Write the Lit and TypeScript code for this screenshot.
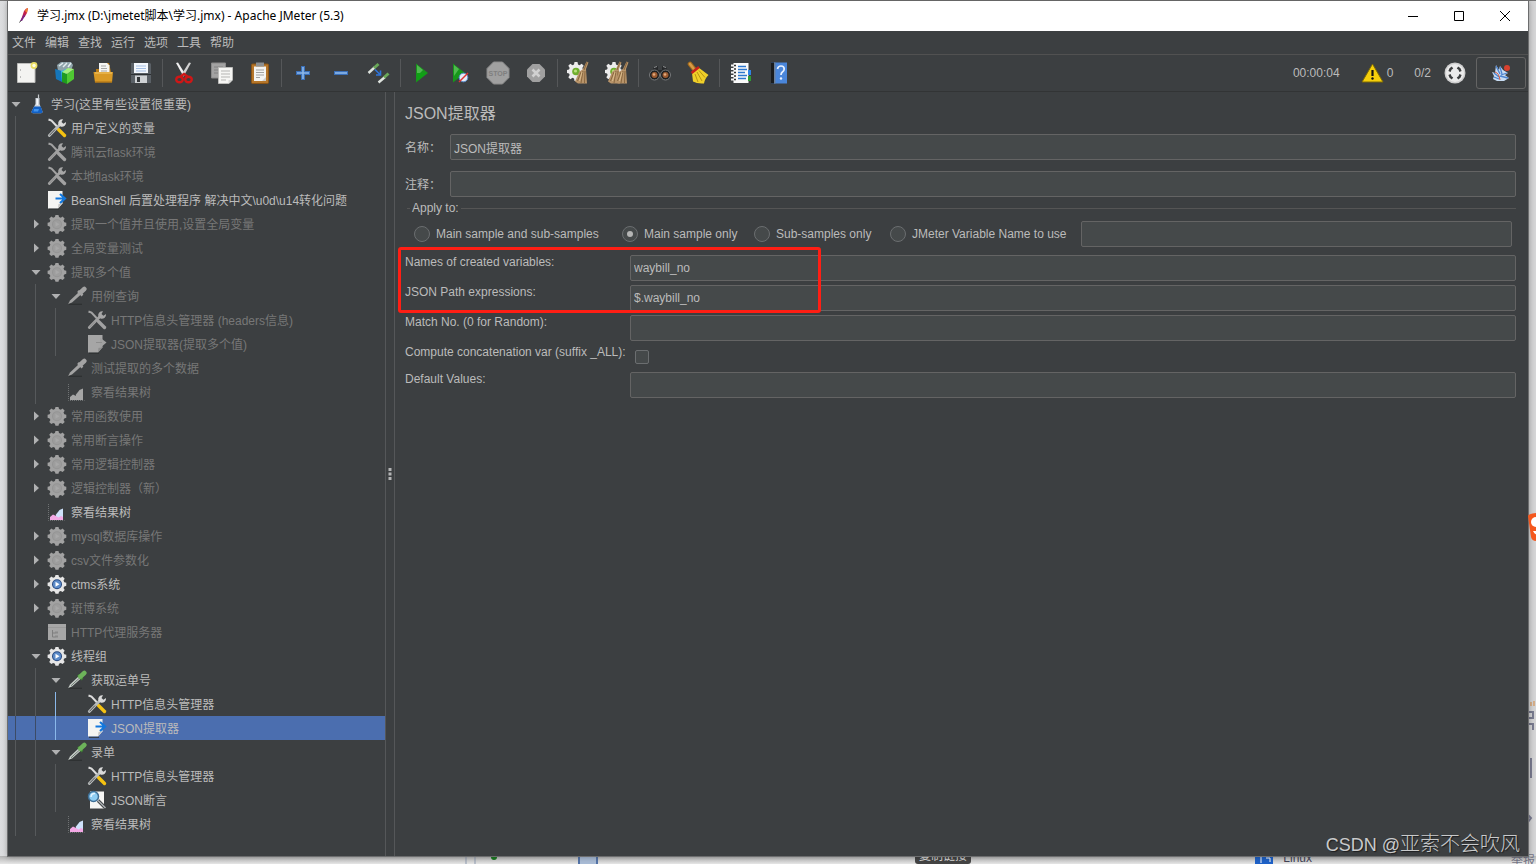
import { LitElement, html, svg, css, nothing } from "lit";
import { customElement, state } from "lit/decorators.js";
import { classMap } from "lit/directives/class-map.js";

type Row = { level: number; icon: string; text: string; off?: boolean; open?: boolean; closed?: boolean };

const rows: Row[] = [
  { level: 0, icon: "flask", text: "学习(这里有些设置很重要)", open: true },
  { level: 1, icon: "tools", text: "用户定义的变量" },
  { level: 1, icon: "tools", text: "腾讯云flask环境", off: true },
  { level: 1, icon: "tools", text: "本地flask环境", off: true },
  { level: 1, icon: "export", text: "BeanShell 后置处理程序 解决中文\\u0d\\u14转化问题" },
  { level: 1, icon: "gear", text: "提取一个值并且使用,设置全局变量", off: true, closed: true },
  { level: 1, icon: "gear", text: "全局变量测试", off: true, closed: true },
  { level: 1, icon: "gear", text: "提取多个值", off: true, open: true },
  { level: 2, icon: "dropper", text: "用例查询", off: true, open: true },
  { level: 3, icon: "tools", text: "HTTP信息头管理器 (headers信息)", off: true },
  { level: 3, icon: "export", text: "JSON提取器(提取多个值)", off: true },
  { level: 2, icon: "dropper", text: "测试提取的多个数据", off: true },
  { level: 2, icon: "chart", text: "察看结果树", off: true },
  { level: 1, icon: "gear", text: "常用函数使用", off: true, closed: true },
  { level: 1, icon: "gear", text: "常用断言操作", off: true, closed: true },
  { level: 1, icon: "gear", text: "常用逻辑控制器", off: true, closed: true },
  { level: 1, icon: "gear", text: "逻辑控制器（新）", off: true, closed: true },
  { level: 1, icon: "chart", text: "察看结果树" },
  { level: 1, icon: "gear", text: "mysql数据库操作", off: true, closed: true },
  { level: 1, icon: "gear", text: "csv文件参数化", off: true, closed: true },
  { level: 1, icon: "gear", text: "ctms系统", closed: true },
  { level: 1, icon: "gear", text: "斑博系统", off: true, closed: true },
  { level: 1, icon: "server", text: "HTTP代理服务器", off: true },
  { level: 1, icon: "gear", text: "线程组", open: true },
  { level: 2, icon: "dropper", text: "获取运单号", open: true },
  { level: 3, icon: "tools", text: "HTTP信息头管理器" },
  { level: 3, icon: "export", text: "JSON提取器" },
  { level: 2, icon: "dropper", text: "录单", open: true },
  { level: 3, icon: "tools", text: "HTTP信息头管理器" },
  { level: 3, icon: "assert", text: "JSON断言" },
  { level: 2, icon: "chart", text: "察看结果树" },
];

/* Icons of the tree, on a 20 x 20 grid. */
const gearPath =
  "M8.500 1h3l.5 2 1.800.8 1.800-1.200 2.100 2.100-1.200 1.900.8 1.700 2 .5v3l-2 .6-.8 1.700 1.200 1.900-2.100 2.100-1.900-1.200-1.700.8-.5 2h-3l-.6-2-1.700-.8-1.900 1.200-2.100-2.100 1.200-1.900L2.600 12.400l-2-.6v-3l2-.5.8-1.700-1.200-1.900 2.100-2.100 1.900 1.200L7.900 3z";

const treeIcon = (name: string, off = false) => {
  const c = (on: string, grey: string) => (off ? grey : on);
  switch (name) {
    case "flask":
      return svg`<path d="M8.500 4h4v6l3 7.500q.3 1.700-1.500 1.700H6q-1.800 0-1.500-1.700l4-7.500z" fill="#cfd5dc"/><path d="M9.500 5h1.500v6H9.500z" fill="#f6f8fa"/><path d="M7 12.500h6.800l1.700 5q.2 1.700-1.500 1.700H6q-1.700 0-1.500-1.700z" fill="#1260c4"/><path d="M7 15h5l-1 2.500H6.500z" fill="#3f93f0"/><path d="M11.500.5V5" stroke="#c3c7cb" stroke-width="1.200"/>`;
    case "tools":
      return svg`<path d="M1.500 1.500l3 1 5.500 6" stroke="${c("#dcdcdc", "#a2a2a2")}" stroke-width="2" fill="none"/><path d="M11.500 11.500l6 6" stroke="${c("#f5c211", "#a2a2a2")}" stroke-width="3.400" stroke-linecap="round"/><path d="M2.300 17.500L13 6.500" stroke="${c("#b9bcbc", "#a2a2a2")}" stroke-width="2.800" stroke-linecap="round"/><path d="M2.500 17.300L8 11.500" stroke="${c("#4b4e50", "#8b8b8b")}"/><path d="M16 1.200a4.200 4.200 0 0 0-4.700 5.200l2.600 2.300a4.200 4.200 0 0 0 5.100-4.700l-2.600 1.700-1.900-1.700z" fill="${c("#dadada", "#a6a6a6")}"/>`;
    case "export":
      return svg`<path d="M1 1h14.500v12.500L11 18.500H1z" fill="${c("#f4f4f2", "#a6a6a6")}"/><path d="M15.500 13l-4.500 5.500.5-4.500z" fill="${c("#c6c6c6", "#8d8d8d")}"/><path d="M2 19.300h10" stroke="#2f3233"/>${
        off
          ? svg`<path d="M13 3.500l6.500 5-6.500 5.500z" fill="#a0a0a0"/><path d="M9 8.500h6" stroke="#8d8d8d"/>`
          : svg`<path d="M8.500 8.500h9M13 4l5 4.500-5 4.500" stroke="#1277dd" stroke-width="2.200" fill="none"/>`
      }`;
    case "gear":
      return svg`<path d="${gearPath}" fill="${c("#e6e6e6", "#a2a2a2")}"/><circle cx="10" cy="10.200" r="5" fill="${c("#24467e", "#949494")}"/><circle cx="10" cy="10.200" r="4" fill="${c("#5c8bc9", "#9d9d9d")}"/><path d="M8.500 7.700l4 2.600-4 2.500z" fill="${c("#fff", "#a8a8a8")}"/>`;
    case "dropper":
      return svg`<path d="M2 18.300h13" stroke="#2d3031" stroke-width="1.200"/><path d="M1.200 18L3 14.500l9-8.500 2.300 2.300L5 16.500z" fill="${c("#c9cfcb", "#a3a3a3")}"/><path d="M4 15.800L12.500 8" stroke="${c("#6f7c74", "#a3a3a3")}"/><path d="M11 5l4.500 4.500" stroke="${c("#3d7f32", "#a3a3a3")}" stroke-width="2.500"/><path d="M13.500 6.500L17.300 3" stroke="${c("#6db35a", "#a3a3a3")}" stroke-width="4.600" stroke-linecap="round"/>`;
    case "chart":
      return svg`<path d="M1.500 2v16.500h16" stroke="#6f7273" fill="none" stroke-dasharray="1 1"/><path d="M9 12.500l3.500-4.500L16 6.500V18H8z" fill="${c("#cfe2fb", "#a6a6a6")}"/><path d="M3 18v-3l3-2.500 3 1.500 2.500 1.500L14 14l2 1v3z" fill="${c("#f4a9e6", "#a6a6a6")}"/>`;
    case "server":
      return svg`<path d="M1 2h18v16H1z" fill="#a6a6a6"/><path d="M1 5.500h18" stroke="#9a9a9a"/><path d="M5.500 8v7h3M5.500 11h3" stroke="#7f7f7f" fill="none"/><path d="M8 9.500h3v2H8zM8 13.500h3v2H8z" fill="#8a8a8a"/>`;
    default:
      return svg`<path d="M3 1.500h14v17H3z" fill="#f6f6f4"/><path d="M11 10.500l7.500 7.500" stroke="#3c3f41" stroke-width="3.200"/><path d="M11 10.500l7.500 7.500" stroke="#a9adb0" stroke-width="1.600"/><circle cx="6.500" cy="6.500" r="5" fill="#8ecdf3" stroke="#3f6f96" stroke-width="1.500"/><path d="M4 7q.5-4 4-3.500" stroke="#e3f4ff" stroke-width="1.500" fill="none"/>`;
  }
};

/* Icons of the tool bar, on a 24 x 24 grid. */
const brush = (x: number) =>
  svg`<path d="M${x + 9.500} .5l2 1-2.500 6.500 1 14.500h-9l-3-2 4-9.500 4-3z" fill="#b8946a"/><path d="M${x + 10} 1l-3 8M${x + 4} 11l-3.500 9M${x + 6} 10l-2 12M${x + 8} 10l-.5 12" stroke="#7c5c34" fill="none" stroke-width=".8"/><path d="M${x + 5} 11l-2.500 9" stroke="#dcbc8c"/>`;
const whiteGear = svg`<path d="M7.500 1h3l.5 2.500 1.500.7 2.200-1.400 2 2-1.400 2.200.7 1.500 2.500.5v3l-2.500.5-.7 1.500 1.400 2.200-2 2-2.200-1.400-1.500.7-.5 2.500h-3l-.5-2.500-1.500-.7-2.200 1.400-2-2L2.700 14 2 12.500-.5 12V9L2 8.500 2.700 7 1.300 4.800l2-2L5.500 4.200 7 3.500z" fill="#ececec"/><circle cx="9" cy="10.500" r="3.800" fill="#6fae2e"/><circle cx="8.500" cy="10" r="1.600" fill="#b9e07c"/>`;

const bar: Record<string, unknown> = {
  新建: svg`<path d="M2.500 2.500h17.500v19H2.500z" fill="#f3f3f1" stroke="#bdbdbb"/><path d="M5 9h1M5 16h1" stroke="#888"/><circle cx="19" cy="4.500" r="3.400" fill="#e9dc62"/><circle cx="19" cy="4.500" r="1.700" fill="#fffde0"/>`,
  模板: svg`<path d="M4 4l4-3h10l2 3-2 6H5z" fill="#8fa3aa"/><path d="M6 5l4-3M10 6l4-4M15 6l3-4" stroke="#e3edf0" stroke-width="1.500"/><path d="M2 8l7 2v11l-6-3z" fill="#1576ba"/><path d="M8 10l5-2v13l-4 0z" fill="#35b3e4"/><path d="M9 11l5 2v10l-5-2z" fill="#1f9b1f"/><path d="M14 13l7-5v10l-7 5z" fill="#4fc932"/><path d="M9 11l6-4 6 1-7 5z" fill="#a2ef7c"/>`,
  打开: svg`<path d="M5 11V8h3l1-6h9l2 9z" fill="#b77a16"/><path d="M8 2h8l2.500 2.500V13H8z" fill="#f5f5f3"/><path d="M10 5h5M10 7.500h6M10 10h6" stroke="#a7a7a5"/><path d="M2.500 11h19.500l-1 10.500H4z" fill="#d99a26"/><path d="M4 12h17" stroke="#f3c86b"/><path d="M4 21h17" stroke="#a86c10"/>`,
  保存: svg`<path d="M2 2h19l1 1v19H2z" fill="#5a6066"/><path d="M5 2h14v10H5z" fill="#f3f7fc"/><path d="M7 5h10M7 7.500h10M7 10h10" stroke="#a5bfe4"/><path d="M6 14.500h12V22H6z" fill="#cfd2d5"/><path d="M8 16h3v5H8z" fill="#33373a"/><path d="M2 13.500h20" stroke="#2c3033"/>`,
  剪切: svg`<path d="M4 2l2-.5 7.500 12-2 2z" fill="#f0f0f0"/><path d="M19 2l-2-.5-7.500 12 2 2z" fill="#d2d2d2"/><ellipse cx="7.500" cy="18.500" rx="3.300" ry="2.800" fill="none" stroke="#cf1717" stroke-width="2.400"/><ellipse cx="16.500" cy="18.500" rx="3.300" ry="2.800" fill="none" stroke="#cf1717" stroke-width="2.400"/><path d="M8.500 15.500l3.500-2.500 3.500 2.500" stroke="#cf1717" stroke-width="2.400" fill="none"/>`,
  复制: svg`<path d="M1.500 2h14v15h-14z" fill="#a3a3a3" stroke="#8a8a8a"/><path d="M4 6h9M4 9h5M4 12h4" stroke="#828282"/><path d="M8.500 6.500h14V19l-3.500 3.500H8.500z" fill="#f6f6f4" stroke="#bdbdbb"/><path d="M11 10h9M11 13h9M11 16h9M11 19h5" stroke="#b5b5b3"/><path d="M22 19h-3.500v3.500" fill="#d9d9d7"/>`,
  粘贴: svg`<rect x="3.500" y="3" width="17" height="19.500" rx="1" fill="#b5762a" stroke="#8a5415"/><path d="M6 5.500h12V20H6z" fill="#f4f4f2"/><path d="M8 1.500h8v4H8z" fill="#8d9092"/><path d="M8 9h8M8 11.500h8M8 14h8M8 16.500h4" stroke="#a2a2a0"/><path d="M18 16l-4 4h4z" fill="#cfcfcd"/>`,
  展开: svg`<path d="M12 5v14M5 12h14" stroke="#3a6fb8" stroke-width="4"/><path d="M12 6v12M6 12h12" stroke="#8db8ea" stroke-width="1.600"/>`,
  折叠: svg`<path d="M5 12h14" stroke="#3a6fb8" stroke-width="4"/><path d="M6 12h12" stroke="#8db8ea" stroke-width="1.600"/>`,
  切换: svg`<path d="M1.500 12L7.500 6.500" stroke="#dfe4df" stroke-width="2.400"/><path d="M7 7l4.500-4" stroke="#6aa859" stroke-width="3"/><path d="M11.500 21.500L18 16" stroke="#dfe4df" stroke-width="2.400"/><path d="M17 16.500l4.500-4" stroke="#6aa859" stroke-width="3"/><path d="M8 8.500l5 5M13.500 9.500V14H9" stroke="#2f74d8" stroke-width="1.600" fill="none"/>`,
  启动: svg`<path d="M6 2.500L18 12 6 21.500z" fill="#17961b"/><path d="M7 4l6 5-6 6z" fill="#4fb94e"/><path d="M7 20l10-8H7z" fill="#0fa015"/>`,
  不停顿开始: svg`<path d="M5 2.500L17 12 5 21.500z" fill="#17961b"/><path d="M6 4l5 4-5 7z" fill="#4fb94e"/><circle cx="15.500" cy="16.500" r="4.300" fill="#e6ecf5" stroke="#5b8fd0"/><path d="M11 21l9-9" stroke="#d33" stroke-width="1.400"/>`,
  停止: svg`<path d="M7.500 1h9l6.500 6.500v9L16.500 23h-9L1 16.500v-9z" fill="#a0a0a0" stroke="#8b8b8b"/><text x="12" y="15" text-anchor="middle" font-size="7" font-weight="700" fill="#7f7f7f">STOP</text>`,
  关闭: svg`<path d="M8.500 3h7L21 8.500v7L15.500 21h-7L3 15.500v-7z" fill="#a0a0a0"/><path d="M8.500 8.500l7 7M15.500 8.500l-7 7" stroke="#d0d0d0" stroke-width="2.600"/>`,
  清除: svg`<g>${whiteGear}</g>${brush(10)}`,
  清除全部: svg`<g>${whiteGear}</g>${brush(5)}${brush(12)}`,
  查找: svg`<path d="M6 6l4-1v4l4 0V5l4 1 4 8H2z" fill="#26282a"/><circle cx="6.500" cy="14" r="5" fill="#1d1f20" stroke="#77797b"/><circle cx="17.500" cy="14" r="5" fill="#1d1f20" stroke="#77797b"/><circle cx="6.500" cy="14" r="3" fill="#9b5a30"/><circle cx="17.500" cy="14" r="3" fill="#9b5a30"/><circle cx="6" cy="13.500" r="1.300" fill="#e0a87c"/><circle cx="17" cy="13.500" r="1.300" fill="#e0a87c"/><path d="M6 6.500l3-1M15 5.500l3 1" stroke="#8d8f91"/>`,
  重置查找: svg`<path d="M4 3l4 5" stroke="#a26a1c" stroke-width="4.600" stroke-linecap="round"/><path d="M4 3l3.500 4.500" stroke="#d79b46" stroke-width="2.600" stroke-linecap="round"/><path d="M6 12l6.500-5.500L22.500 14q-3.500 3-4.500 8.500-7 .5-11-2z" fill="#f0d029"/><path d="M5.500 12l7.500-6" stroke="#c8211c" stroke-width="2.600"/><path d="M9 13l3 8M11 11l5 9M13 9.500l6 7" stroke="#b89512"/>`,
  函数助手: svg`<path d="M4.500 2h15v20h-15z" fill="#fafafa"/><path d="M19 9h3v5h-3z" fill="#2f83e4"/><path d="M19 15h3v5h-3z" fill="#2f9b34"/><path d="M9 5.500h8M9 8.500h9M9 11.500h7M9 14.500h9M9 17.500h8" stroke="#2c77cf" stroke-width="1.400"/><path d="M2 4.500h5M2 8h5M2 11.500h5M2 15h5M2 18.500h5" stroke="#f4f4f4" stroke-width="2"/><path d="M5 4.500h2M5 8h2M5 11.500h2M5 15h2M5 18.500h2" stroke="#333" stroke-width="1.400"/>`,
  帮助: svg`<path d="M4 1.500h16v21H4z" fill="#4a86da"/><path d="M4 1.500h3v21H4z" fill="#1a1c1e"/><path d="M7 1.500h1.500v21H7z" fill="#6b7f99"/><path d="M10.500 8q.5-3 3.500-3 3.200 0 3.200 3 0 1.800-1.800 3-1.400 1-1.400 3" stroke="#e8f1ff" stroke-width="1.700" fill="none"/><circle cx="14" cy="17.500" r="1.200" fill="#e8f1ff"/>`,
};

const groups = [
  ["新建", "模板", "打开", "保存"],
  ["剪切", "复制", "粘贴"],
  ["展开", "折叠", "切换"],
  ["启动", "不停顿开始", "停止", "关闭"],
  ["清除", "清除全部"],
  ["查找", "重置查找"],
  ["函数助手", "帮助"],
];

@customElement("app-root")
export class AppRoot extends LitElement {
  @state() private selected = 26;
  @state() private folded = new Set<number>();

  static styles = css`
    :host {
      display: block;
      font: 12px/16px "Liberation Sans", "Noto Sans CJK SC", sans-serif;
      color: #bbbbbb;
    }
    * { box-sizing: border-box; }
    button, input { font: inherit; color: inherit; margin: 0; }
    button { background: none; border: 0; padding: 0; }
    svg { display: block; flex: none; }
    .desktop {
      position: relative;
      display: flex;
      height: 100vh;
      padding: 1px 7px 7px;
      overflow: hidden;
      background: linear-gradient(90deg, #dcdddf, #e3e4e6 7px, #dededf 50%, #d6d6d7);
    }
    .behind { position: absolute; left: 0; right: 0; bottom: 0; height: 8px; background: linear-gradient(#b4b4b4, #e6e6e6); }
    .sky { position: absolute; left: 0; right: 0; top: 0; height: 1px; background: #777777; }
    .chip { position: absolute; left: 915px; bottom: 0; width: 56px; padding: 0 4px; background: #444444; border-radius: 3px; color: #dddddd; white-space: nowrap; }
    .linux { position: absolute; right: 224px; bottom: -2px; color: #444455; }
    .report { position: absolute; right: 1px; bottom: -5px; color: #777788; }
    .strip { position: absolute; left: 464px; bottom: 0; }
    .logo { position: absolute; right: 0; top: 513px; z-index: 2; }
    .side { position: absolute; right: 0; top: 700px; }
    .window {
      position: relative;
      flex: 1;
      min-width: 0;
      display: flex;
      flex-direction: column;
      background: #3c3f41;
      border: 1px solid #6c6d6e;
      border-top: 0;
      box-shadow: 0 0 6px #00000055;
    }
    .titlebar {
      display: flex;
      align-items: center;
      height: 30px;
      background: #ffffff;
      color: #000000;
      padding-left: 8px;
      font-family: "Noto Sans", "Noto Sans CJK SC", sans-serif;
    }
    .titlebar h1 { flex: 1; margin: 0 0 0 5px; font-size: 12px; font-weight: 400; line-height: 16px; }
    .titlebar button { width: 46px; height: 30px; display: grid; place-items: center; }
    .menubar { display: flex; gap: 9px; height: 24px; padding: 0 4px; border-bottom: 1px solid #515151; }
    .menubar button { height: 23px; }
    .toolbar { display: flex; align-items: center; height: 37px; border-bottom: 1px solid #323435; }
    .tool { width: 38px; height: 36px; display: grid; place-items: center; }
    .sep { width: 5px; height: 28px; padding-left: 2px; }
    .sep::before { content: ""; display: block; width: 1px; height: 28px; background: #555759; }
    .status { margin-left: auto; display: flex; align-items: center; padding-right: 2px; }
    .warn { display: flex; align-items: center; gap: 3px; margin: 0 21px; }
    .threads { margin-right: 13px; }
    .remote { width: 50px; height: 32px; margin-left: 10px; display: grid; place-items: center; border: 1px solid #646464; border-radius: 3px; }
    .body { flex: 1; display: flex; min-height: 0; }
    .tree { width: 378px; flex: none; margin: 0; padding: 0; list-style: none; border-right: 1px solid #555759; overflow: hidden; }
    .row { display: flex; align-items: center; height: 24px; white-space: nowrap; cursor: default; }
    .row.off { color: #777777; }
    .row.sel { background: #4b6eaf; }
    .guide { width: 20px; height: 24px; padding-left: 7px; flex: none; }
    .guide::before { content: ""; display: block; width: 1px; height: 24px; background: #56595b; }
    .row.sel .guide::before { background: #3c4b66; }
    .guide.lit::before, .row.sel .guide.lit::before { background: #8ab8ea; }
    .arrow { width: 16px; height: 24px; flex: none; display: grid; place-items: center; }
    .ticon { margin: 0 4px 0 3px; }
    .name { padding-top: 2px; line-height: 22px; }
    .divider { width: 8px; flex: none; display: grid; place-items: center; }
    .panel { flex: 1; min-width: 0; border-left: 1px solid #555759; padding: 12px 12px 0 10px; }
    .panel h2 { margin: 0 0 11px; font-size: 16px; line-height: 19px; font-weight: 400; }
    .named { display: grid; grid-template-columns: 45px 1fr; align-items: center; margin-bottom: 11px; }
    .named label { padding-top: 2px; }
    .text { width: 100%; min-width: 0; height: 26px; padding: 0 3px; background: #45494a; border: 1px solid #646464; border-radius: 2px; outline: none; }
    fieldset { margin: 0 0 8px 2px; padding: 6px 4px 0 7px; border: 0; border-top: 1px solid #555555; min-width: 0; }
    .named + fieldset { margin-top: -7px; }
    legend { margin-left: -4px; padding: 0 2px; line-height: 14px; }
    .radios { display: grid; grid-template-columns: 208px 132px 136px 191px 1fr; align-items: center; }
    .opt { display: flex; align-items: center; gap: 6px; white-space: nowrap; }
    .radio { appearance: none; flex: none; width: 16px; height: 16px; background: #45494a; border: 1px solid #6b6e70; border-radius: 50%; display: grid; place-items: center; }
    .radio:checked::before { content: ""; width: 6px; height: 6px; border-radius: 50%; background: #b5b5b5; }
    .form { position: relative; }
    .field { display: grid; grid-template-columns: 225px 1fr; align-items: start; height: 30px; }
    .field.short { height: 27px; }
    .field label { line-height: 14px; white-space: nowrap; }
    .check { appearance: none; width: 14px; height: 14px; margin: 5px; background: #45494a; border: 1px solid #6b6e70; border-radius: 2px; }
    .mark { position: absolute; left: -7px; top: -8px; width: 423px; height: 66px; border: 3px solid #ff1e14; border-radius: 3px; pointer-events: none; }
    .watermark { position: absolute; right: 16px; bottom: 7px; font-size: 18px; line-height: 24px; color: #c9cacb; text-shadow: 1px 1px 1px #1c1d1e; }
    .watermark span { font-size: 20px; font-weight: 300; }
  `;

  private visible() {
    const out: number[] = [];
    let hide = Infinity;
    rows.forEach((r, i) => {
      if (r.level > hide) return;
      hide = this.folded.has(i) ? r.level : Infinity;
      out.push(i);
    });
    return out;
  }

  private toggle(i: number) {
    const next = new Set(this.folded);
    next.has(i) ? next.delete(i) : next.add(i);
    this.folded = next;
  }

  private row(i: number) {
    const r = rows[i];
    const open = r.open && !this.folded.has(i);
    const lit = i === 25 || i === 26;
    return html`<li
      role="treeitem"
      aria-level=${r.level + 1}
      aria-selected=${i === this.selected}
      class=${classMap({ row: true, off: !!r.off, sel: i === this.selected })}
      @click=${() => (this.selected = i)}
    >
      ${Array.from({ length: r.level }, (_, d) => html`<span class=${classMap({ guide: true, lit: lit && d === 2 })}></span>`)}
      ${r.open || r.closed
        ? html`<button class="arrow" aria-label="展开或折叠" @click=${() => this.toggle(i)}>
            <svg width="10" height="10" viewBox="0 0 10 10"><path d=${open ? "M.5 3h9L5 8z" : "M3 .5v9L8 5z"} fill="#b0b1b2" /></svg>
          </button>`
        : html`<span class="arrow"></span>`}
      <svg class="ticon" width="20" height="20" viewBox="0 0 20 20">${treeIcon(r.icon, r.off)}</svg>
      <span class="name">${r.text}</span>
    </li>`;
  }

  private field(id: string, label: string, value = "") {
    return html`<div class="field"><label for=${id}>${label}</label><input class="text" id=${id} .value=${value} /></div>`;
  }

  private radio(label: string, on = false) {
    return html`<label class="opt"><input class="radio" type="radio" name="apply" .checked=${on} />${label}</label>`;
  }

  render() {
    return html`<div class="desktop">
      <div class="behind"></div>
      <div class="sky"></div>
      <div class="chip">复制链接</div>
      <div class="linux">Linux</div>
      <div class="report">举报</div>
      <svg class="strip" width="900" height="8" viewBox="0 0 900 8">
        <path d="M2 0v8M11 0v8" stroke="#8f9bb0" />
        <path d="M115 0h19v8h-19z" fill="#a9bcd6" /><path d="M115 0v8M133 0v8" stroke="#5474a8" stroke-width="2" />
        <circle cx="30" cy="1" r="3" fill="#1d7a24" />
        <path d="M791 0h18v8h-18z" fill="#1f62c8" /><path d="M797 1v6M802 2h4v4" stroke="#fff" fill="none" />
      </svg>
      <svg class="side" width="8" height="140" viewBox="0 0 8 140">
        <path d="M1 12h4v6H1M1 24h4v6M3 58v20M0 115l3 3-3 4" stroke="#7b7d92" stroke-width="2" fill="none" />
        <path d="M3 2v4M6 1v5" stroke="#d98a3d" />
      </svg>
      <div class="window">
        <header class="titlebar">
          <svg width="16" height="18" viewBox="0 0 16 18">
            <path d="M5 13L8 4q2-3 4-3-.5 5-3 8.500z" fill="#c4214c" /><path d="M9 4q1-3 3-3l-1 5z" fill="#f0802d" /><path d="M4 14l4-7 1 2-3 5z" fill="#7c2585" /><path d="M3.500 15.500l1.500-2" stroke="#444" />
          </svg>
          <h1>学习.jmx (D:\\jmetet脚本\\学习.jmx) - Apache JMeter (5.3)</h1>
          <button aria-label="最小化"><svg width="12" height="12" viewBox="0 0 12 12"><path d="M1 6.500h10" stroke="#000" /></svg></button>
          <button aria-label="最大化"><svg width="12" height="12" viewBox="0 0 12 12"><path d="M1.500 1.500h9v9h-9z" stroke="#000" fill="none" /></svg></button>
          <button aria-label="关闭窗口"><svg width="12" height="12" viewBox="0 0 12 12"><path d="M1 1l10 10M11 1L1 11" stroke="#000" fill="none" /></svg></button>
        </header>
        <nav class="menubar">${["文件", "编辑", "查找", "运行", "选项", "工具", "帮助"].map((m) => html`<button>${m}</button>`)}</nav>
        <div class="toolbar">
          ${groups.map(
            (g, n) => html`${n ? html`<span class="sep"></span>` : nothing}${g.map(
              (name) => html`<button class="tool" aria-label=${name}><svg width="24" height="24" viewBox="0 0 24 24">${bar[name]}</svg></button>`
            )}`
          )}
          <div class="status">
            <span>00:00:04</span>
            <span class="warn">
              <svg width="23" height="20" viewBox="0 0 23 20"><path d="M11.500 1L22 19H1z" fill="#f5cf0b" stroke="#7e6b05" stroke-linejoin="round" /><path d="M11.500 7v6" stroke="#111" stroke-width="2.200" /><circle cx="11.500" cy="15.500" r="1.200" fill="#111" /></svg>
              <span>0</span>
            </span>
            <span class="threads">0/2</span>
            <svg width="22" height="22" viewBox="0 0 22 22"><circle cx="11" cy="11" r="10.500" fill="#cfcfcf" /><circle cx="11" cy="11" r="9" fill="#ebebeb" /><path d="M5.500 9.500l1-2.500 2-1.500M13.500 5.500l2 1.500 1 2.500M16.500 12.500l-1 2.500-2 1.500M8.500 16.500l-2-1.500-1-2.500" stroke="#3b3d3e" stroke-width="2.400" fill="none" /></svg>
            <button class="remote" aria-label="远程">
              <svg width="20" height="18" viewBox="0 0 20 18"><path d="M5 1l3 5 1-4 3 4 5 3-3 2 4 3-5 3H6l-4-2 1-3-2-4 3 1z" fill="#c7dcf3" /><path d="M5 2l4 8M9 3l2 7M16 9l-6 2M17 14l-8-2M3 9l5 4M3 13l5 2" stroke="#4c83cf" stroke-width="1.300" /><path d="M4 8q4 1 5 8" stroke="#d9573a" fill="none" /><circle cx="16" cy="4" r="3" fill="#d8412f" /></svg>
            </button>
          </div>
        </div>
        <div class="body">
          <ul class="tree" role="tree">${this.visible().map((i) => this.row(i))}</ul>
          <div class="divider"><svg width="4" height="14" viewBox="0 0 4 14"><path d="M.5 1h3v3h-3zM.5 5.500h3v3h-3zM.5 10h3v3h-3z" fill="#b4b5b6" /></svg></div>
          <main class="panel">
            <h2>JSON提取器</h2>
            <div class="named"><label for="name">名称：</label><input class="text" id="name" .value=${"JSON提取器"} /></div>
            <div class="named"><label for="note">注释：</label><input class="text" id="note" /></div>
            <fieldset>
              <legend>Apply to:</legend>
              <div class="radios">
                ${this.radio("Main sample and sub-samples")} ${this.radio("Main sample only", true)}
                ${this.radio("Sub-samples only")} ${this.radio("JMeter Variable Name to use")}
                <input class="text" aria-label="JMeter Variable Name to use" />
              </div>
            </fieldset>
            <div class="form">
              ${this.field("names", "Names of created variables:", "waybill_no")}
              ${this.field("paths", "JSON Path expressions:", "$.waybill_no")}
              ${this.field("match", "Match No. (0 for Random):")}
              <div class="field short"><label for="concat">Compute concatenation var (suffix _ALL):</label><input class="check" id="concat" type="checkbox" /></div>
              ${this.field("defaults", "Default Values:")}
              <div class="mark"></div>
            </div>
          </main>
        </div>
      </div>
      <svg class="logo" width="9" height="28" viewBox="0 0 9 28"><path d="M1 3q0-2 8-3v28q-4 0-5-4z" fill="#f4581e" /><ellipse cx="9" cy="9" rx="5" ry="5" fill="#fff" /><path d="M6 18q2 4 3 3v-3z" fill="#fff" /></svg>
      <div class="watermark">CSDN @<span>亚索不会吹风</span></div>
    </div>`;
  }
}
